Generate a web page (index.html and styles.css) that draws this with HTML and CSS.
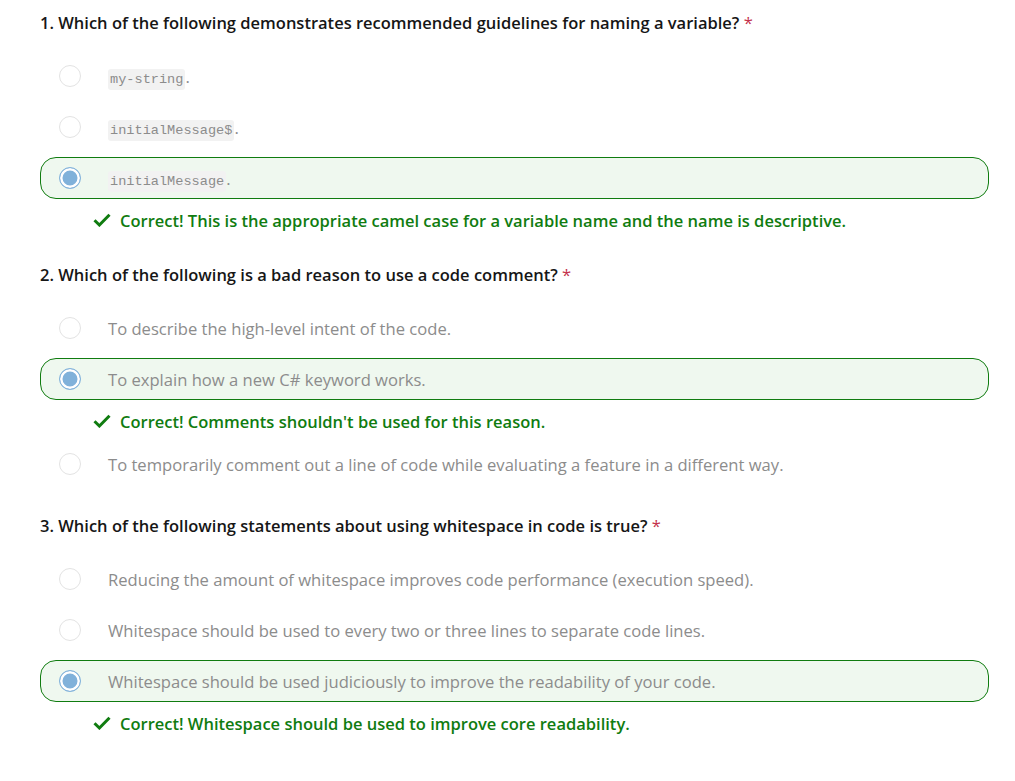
FILE: index.html
```html
<!DOCTYPE html>
<html lang="en">
<head>
<meta charset="utf-8">
<title>Quiz</title>
<link rel="stylesheet" href="styles.css">
</head>
<body>
<div class="quiz">
  <section class="question">
    <h3 class="q-title">1. Which of the following demonstrates recommended guidelines for naming a variable? <span class="req">*</span></h3>
    <div class="option"><span class="radio"></span><span class="label"><code>my-string</code>.</span></div>
    <div class="option"><span class="radio"></span><span class="label"><code>initialMessage$</code>.</span></div>
    <div class="option selected"><span class="radio"></span><span class="label"><code>initialMessage</code>.</span></div>
    <div class="feedback"><svg class="check" viewBox="0 0 18 14" width="18" height="14"><path d="M1.5 7.2 L6.4 12 L16.5 1.8" fill="none" stroke="#107c10" stroke-width="3"/></svg>Correct! This is the appropriate camel case for a variable name and the name is descriptive.</div>
  </section>
  <section class="question">
    <h3 class="q-title">2. Which of the following is a bad reason to use a code comment? <span class="req">*</span></h3>
    <div class="option"><span class="radio"></span><span class="label">To describe the high-level intent of the code.</span></div>
    <div class="option selected"><span class="radio"></span><span class="label">To explain how a new C# keyword works.</span></div>
    <div class="feedback"><svg class="check" viewBox="0 0 18 14" width="18" height="14"><path d="M1.5 7.2 L6.4 12 L16.5 1.8" fill="none" stroke="#107c10" stroke-width="3"/></svg>Correct! Comments shouldn't be used for this reason.</div>
    <div class="option"><span class="radio"></span><span class="label">To temporarily comment out a line of code while evaluating a feature in a different way.</span></div>
  </section>
  <section class="question">
    <h3 class="q-title">3. Which of the following statements about using whitespace in code is true? <span class="req">*</span></h3>
    <div class="option"><span class="radio"></span><span class="label">Reducing the amount of whitespace improves code performance (execution speed).</span></div>
    <div class="option"><span class="radio"></span><span class="label">Whitespace should be used to every two or three lines to separate code lines.</span></div>
    <div class="option selected"><span class="radio"></span><span class="label">Whitespace should be used judiciously to improve the readability of your code.</span></div>
    <div class="feedback"><svg class="check" viewBox="0 0 18 14" width="18" height="14"><path d="M1.5 7.2 L6.4 12 L16.5 1.8" fill="none" stroke="#107c10" stroke-width="3"/></svg>Correct! Whitespace should be used to improve core readability.</div>
  </section>
</div>
</body>
</html>
```

FILE: styles.css
```css
* { box-sizing: border-box; }
html, body { margin: 0; padding: 0; background: #ffffff; }
body {
  font-family: "Open Sans", "Noto Sans", sans-serif;
  color: #161616;
}
.quiz {
  padding: 11px 26px 0 40px;
}
.question {
  margin-bottom: 29px;
}
.q-title {
  margin: 0 0 20px 0;
  font-size: 16.5px;
  line-height: 24px;
  font-weight: 600;
  color: #161616;
}
.req { color: #c4314b; font-weight: 400; }
.option {
  display: flex;
  align-items: center;
  height: 42px;
  margin-bottom: 9px;
  padding-left: 18px;
  border: 1px solid transparent;
  border-radius: 16px;
}
.option.selected {
  border-color: #107c10;
  background: #eff8ef;
}
.radio {
  flex: none;
  width: 22px;
  height: 22px;
  border-radius: 50%;
  border: 1px solid #e3e3e3;
  background: #fff;
  margin-right: 27px;
}
.selected .radio {
  border: 1.5px solid #86b5dc;
  background: #80b1da;
  box-shadow: inset 0 0 0 2.5px #ffffff;
}
.label {
  font-size: 16.6px;
  color: #8c8c8c;
}
code {
  font-family: "Liberation Mono", "DejaVu Sans Mono", monospace;
  font-size: 13.6px;
  background: #f2f2f2;
  color: #8c8c8c;
  padding: 3px 2px;
  border-radius: 3px;
}
.feedback {
  display: flex;
  align-items: center;
  height: 24px;
  margin-top: 5px;
  margin-bottom: 10px;
  padding-left: 53px;
  font-size: 16.5px;
  font-weight: 600;
  color: #107c10;
}
.feedback:last-child { margin-bottom: 31px; }
.feedback .check { margin-right: 9px; flex: none; }
```
